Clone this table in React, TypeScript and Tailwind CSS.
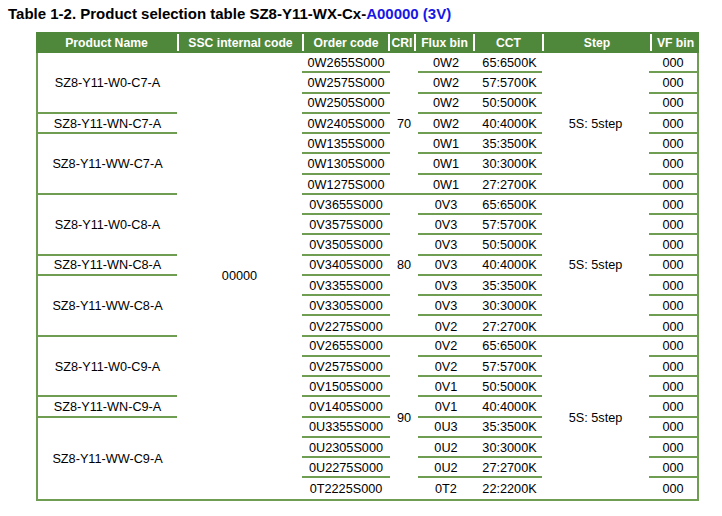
import React from "react";

type Row = { code: string; flux: string; cct: string };
type Group = { cri: string; names: { name: string; span: number }[]; rows: Row[] };

const groups: Group[] = [
  {
    cri: "70",
    names: [
      { name: "SZ8-Y11-W0-C7-A", span: 3 },
      { name: "SZ8-Y11-WN-C7-A", span: 1 },
      { name: "SZ8-Y11-WW-C7-A", span: 3 },
    ],
    rows: [
      { code: "0W2655S000", flux: "0W2", cct: "65:6500K" },
      { code: "0W2575S000", flux: "0W2", cct: "57:5700K" },
      { code: "0W2505S000", flux: "0W2", cct: "50:5000K" },
      { code: "0W2405S000", flux: "0W2", cct: "40:4000K" },
      { code: "0W1355S000", flux: "0W1", cct: "35:3500K" },
      { code: "0W1305S000", flux: "0W1", cct: "30:3000K" },
      { code: "0W1275S000", flux: "0W1", cct: "27:2700K" },
    ],
  },
  {
    cri: "80",
    names: [
      { name: "SZ8-Y11-W0-C8-A", span: 3 },
      { name: "SZ8-Y11-WN-C8-A", span: 1 },
      { name: "SZ8-Y11-WW-C8-A", span: 3 },
    ],
    rows: [
      { code: "0V3655S000", flux: "0V3", cct: "65:6500K" },
      { code: "0V3575S000", flux: "0V3", cct: "57:5700K" },
      { code: "0V3505S000", flux: "0V3", cct: "50:5000K" },
      { code: "0V3405S000", flux: "0V3", cct: "40:4000K" },
      { code: "0V3355S000", flux: "0V3", cct: "35:3500K" },
      { code: "0V3305S000", flux: "0V3", cct: "30:3000K" },
      { code: "0V2275S000", flux: "0V2", cct: "27:2700K" },
    ],
  },
  {
    cri: "90",
    names: [
      { name: "SZ8-Y11-W0-C9-A", span: 3 },
      { name: "SZ8-Y11-WN-C9-A", span: 1 },
      { name: "SZ8-Y11-WW-C9-A", span: 4 },
    ],
    rows: [
      { code: "0V2655S000", flux: "0V2", cct: "65:6500K" },
      { code: "0V2575S000", flux: "0V2", cct: "57:5700K" },
      { code: "0V1505S000", flux: "0V1", cct: "50:5000K" },
      { code: "0V1405S000", flux: "0V1", cct: "40:4000K" },
      { code: "0U3355S000", flux: "0U3", cct: "35:3500K" },
      { code: "0U2305S000", flux: "0U2", cct: "30:3000K" },
      { code: "0U2275S000", flux: "0U2", cct: "27:2700K" },
      { code: "0T2225S000", flux: "0T2", cct: "22:2200K" },
    ],
  },
];

const spanHeight: Record<number, string> = {
  1: "h-[20.25px]",
  3: "h-[60.75px]",
  4: "h-[81px]",
};

const groupHeight: Record<number, string> = {
  7: "h-[141.75px]",
  8: "h-[162px]",
};

const headers: { label: string; w: string; first?: boolean }[] = [
  { label: "Product Name", w: "w-[141px]", first: true },
  { label: "SSC internal code", w: "w-[125px]" },
  { label: "Order code", w: "w-[86px]" },
  { label: "CRI", w: "w-[26px]" },
  { label: "Flux bin", w: "w-[59px]" },
  { label: "CCT", w: "w-[69px]" },
  { label: "Step", w: "w-[108px]" },
  { label: "VF bin", w: "w-[49px]" },
];

const LINE = "border-[#6f9e53]";

export default function App() {
  const allNames = groups.flatMap((g) => g.names);
  return (
    <div
      className="w-[722px] h-[516px] bg-white text-black"
      style={{ fontFamily: '"Liberation Sans", Arial, sans-serif' }}
    >
      <div className="pl-[8px] pt-[5px] h-[32px] text-[15px] leading-[18px] font-bold">
        Table 1-2. Product selection table SZ8-Y11-WX-Cx-
        <span className="text-[#1717e6]">A00000 (3V)</span>
      </div>

      <div className="ml-[36px] w-[663px]">
        {/* Header */}
        <div className="flex h-[21px] bg-[#50883b] text-white text-[12.2px] font-bold">
          {headers.map((h) => (
            <div key={h.label} className={`${h.w} shrink-0 py-[2px]`}>
              <div
                className={`h-full flex items-center justify-center whitespace-nowrap pt-[1px] ${
                  h.first ? "" : "border-l-2 border-white"
                }`}
              >
                {h.label}
              </div>
            </div>
          ))}
        </div>

        {/* Body */}
        <div className={`flex border-x-2 border-b-2 ${LINE} text-[12.7px] leading-none`}>
          {/* Product name column */}
          <div className="w-[139px] shrink-0 flex flex-col">
            {allNames.map((n, i) => (
              <div
                key={n.name}
                className={`${spanHeight[n.span]} flex items-center justify-center pt-[2px] ${
                  i < allNames.length - 1 ? `border-b-2 ${LINE}` : ""
                }`}
              >
                {n.name}
              </div>
            ))}
          </div>

          {/* SSC internal code */}
          <div className="w-[125px] shrink-0 flex items-center justify-center pt-[2px]">00000</div>

          {/* Right part */}
          <div className="w-[395px] shrink-0 flex flex-col">
            {groups.map((g, gi) => {
              const last = gi === groups.length - 1;
              return (
                <div
                  key={g.cri}
                  className={`${groupHeight[g.rows.length]} flex ${last ? "" : `border-b-2 ${LINE}`}`}
                >
                  {/* Order code */}
                  <div className="w-[88px] shrink-0 flex flex-col">
                    {g.rows.map((r, ri) => (
                      <div
                        key={r.code}
                        className={`h-[20.25px] shrink-0 flex items-center justify-center pt-[2px] ${
                          ri < g.rows.length - 1 ? `border-b-2 ${LINE}` : ""
                        }`}
                      >
                        {r.code}
                      </div>
                    ))}
                  </div>
                  {/* CRI */}
                  <div className="w-[28px] shrink-0 flex items-center justify-center pt-[2px]">{g.cri}</div>
                  {/* Flux bin + CCT */}
                  <div className="w-[124px] shrink-0 flex flex-col">
                    {g.rows.map((r, ri) => (
                      <div
                        key={r.code}
                        className={`h-[20.25px] shrink-0 flex items-center pt-[2px] ${
                          ri < g.rows.length - 1 ? `border-b-2 ${LINE}` : ""
                        }`}
                      >
                        <div className="w-[55px] text-center pl-[1px]">{r.flux}</div>
                        <div className="w-[69px] text-center pl-[4px]">{r.cct}</div>
                      </div>
                    ))}
                  </div>
                  {/* Step */}
                  <div className="w-[107px] shrink-0 flex items-center justify-center pt-[2px]">5S: 5step</div>
                  {/* VF bin */}
                  <div className="w-[48px] shrink-0 flex flex-col">
                    {g.rows.map((r, ri) => (
                      <div
                        key={r.code}
                        className={`h-[20.25px] shrink-0 flex items-center justify-center pt-[2px] ${
                          ri < g.rows.length - 1 ? `border-b-2 ${LINE}` : ""
                        }`}
                      >
                        000
                      </div>
                    ))}
                  </div>
                </div>
              );
            })}
          </div>
        </div>
      </div>
    </div>
  );
}
